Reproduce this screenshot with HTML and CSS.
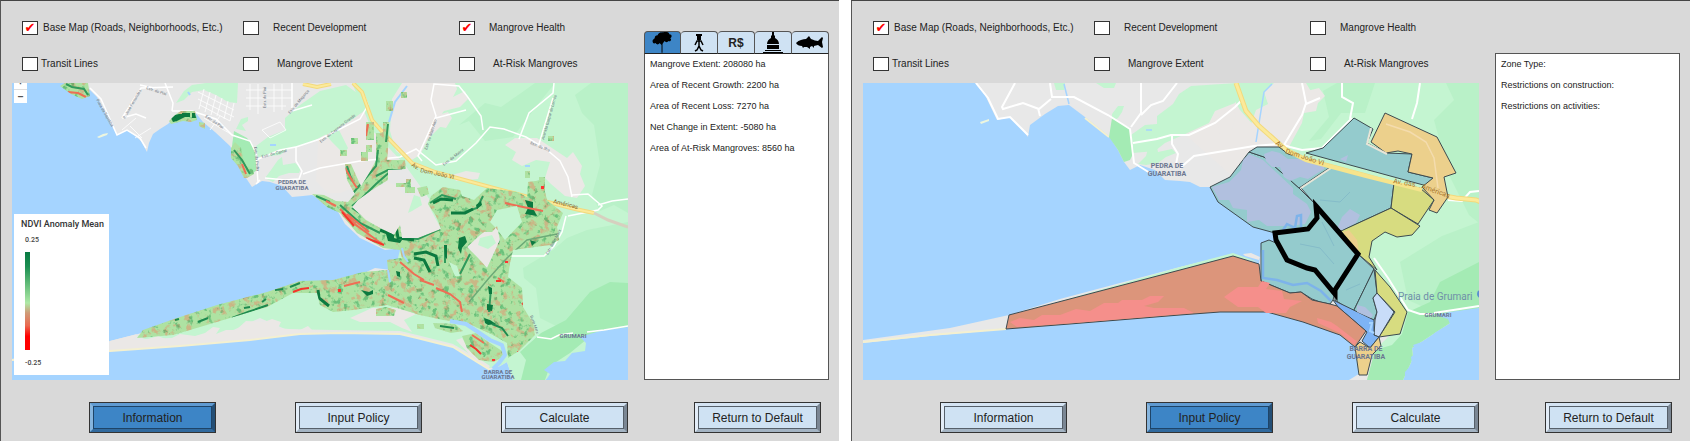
FILE: index.html
```html
<!DOCTYPE html>
<html lang="en">
<head>
<meta charset="utf-8">
<title>Mangrove Policy Dashboard</title>
<link rel="stylesheet" href="styles.css">
</head>
<body>
<main class="screens">

<section class="panel" aria-label="Information view">
  <div class="layers">
    <label class="layer"><input type="checkbox" class="tick" checked>Base Map (Roads, Neighborhoods, Etc.)</label>
    <label class="layer layer-spaced"><input type="checkbox" class="tick">Recent Development</label>
    <label class="layer layer-spaced"><input type="checkbox" class="tick" checked>Mangrove Health</label>
    <label class="layer layer-tight"><input type="checkbox" class="tick">Transit Lines</label>
    <label class="layer layer-wide"><input type="checkbox" class="tick">Mangrove Extent</label>
    <label class="layer layer-wide"><input type="checkbox" class="tick">At-Risk Mangroves</label>
  </div>

  <div class="map">
    <svg class="map-art" viewBox="12 83 616 297" role="img" aria-label="Mangrove health map">
      <defs>
        <filter id="speckGreen" x="0" y="0" width="1" height="1" color-interpolation-filters="sRGB">
          <feTurbulence type="fractalNoise" baseFrequency="0.16" numOctaves="3" seed="8"/>
          <feColorMatrix values="0 0 0 0 0.1  0 0 0 0 0.6  0 0 0 0 0.3  0 6 0 0 -3.4"/>
        </filter>
        <filter id="speckRed" x="0" y="0" width="1" height="1" color-interpolation-filters="sRGB">
          <feTurbulence type="fractalNoise" baseFrequency="0.14" numOctaves="4" seed="21"/>
          <feColorMatrix values="0 0 0 0 0.9  0 0 0 0 0.55  0 0 0 0 0.42  6 0 0 0 -3.2"/>
        </filter>
        <clipPath id="mangroves">
          <path clip-rule="evenodd" d="M312 194L324 195 336 201 348 202 360 188 371 170 376 160 376 135 383 132 383 122 389 122 388 150 387 160 405 160 406 169 388 170 388 180 372 190 358 200 352 207 366 220 380 228 394 235 400 225 402 238 418 238 441 229 436 216 428 204 431 196 443 187 460 190 462 196 474 200 487 188 517 192 527 197 528 182 542 180 547 200 563 213 557 227 559 240 550 245 513 250 510 263 508 277 522 288 523 307 533 323 535 335 520 350 508 358 507 343 493 335 467 323 443 320 420 315 387 305 353 310 333 312 320 305 317 293 293 293 267 307 230 318 200 327 173 335 137 338 143 330 177 318 217 305 267 292 300 281 333 280 363 272 388 270 387 260 402 258 400 250 383 248 357 233 340 213 327 207zM467 247L480 235 484 232 492 232 497 226 500 240 487 268 478 258zM490 222L497 210 517 206 522 222 505 240 496 228zM449 262L457 266 460 276 455 276z"/>
          <path d="M462 336l14-3 14 10 12 8 1 6-10 5-14-2-12-12zM433 323l22 1 8 7-12 2-16-5z"/>
          <path d="M60 86l5-3 23 0 2 13-8 3-11-5zM169 121l6-6 6-4 14 0 2 9-6 2-8-1-12 3zM199 122l6 1v6l-6-3zM231 148l4-6 6 6 2 10 4 8 6 4 1 4-7 4-3 0-6-12-7-8z"/>
          <path d="M401 92h6v6h-6zM386 101h7v10h-7zM351 138h7v6h-7zM340 150h7v6h-7zM361 152h7v9h-7zM366 145h6v7h-6zM366 122h8v18h-8zM376 133h11v30h-11zM525 171h5v7h-5zM539 177h6v17h-6zM548 136h6v5h-6zM345 164l6 0 8 18 4 8-8 4-8-14zM396 183h10v-4h5v8h4v6h-10v-6h-9zM417 188l10-2 2 8-8 3zM376 309l10-2 10 3-2 6-18 0zM417 324h7v5h-7z"/>
        </clipPath>
      </defs>
      <rect x="12" y="83" width="616" height="297" fill="#a5d4ff"/>
      <path fill="#e8e8e8" d="M85 83L88 88 97 97 106 115 117 135 127 130 134 135 141 141 147 152 149 143 153 134 160 129 168 124 172 120 180 112 195 112 203 122 215 132 230 146 240 165 246 178 252 187 262 181 270 182 282 186 292 197 303 196 312 195 328 202 337 210 345 224 360 238 385 250 401 248 402 260 387 260 391 270 375 268 362 274 330 281 300 283 285 290 250 298 218 307 185 318 160 327 138 334 110 341 12 359 12 361 110 351 180 346 250 340 300 334 340 333 400 334 417 338 453 347 477 362 490 370 500 366 507 362 513 380 545 380 628 330V83z"/>
      <path fill="#edf6df" d="M97 137l6-3 5-1-1 2-8 3z"/>
      <path fill="#ebe8e6" d="M320 110l32-24 40-3v90l-52 20-12 0-12-12z"/>
      <path fill="#c4f5d1" d="M352 83H628V330L545 380 513 380 507 362 500 366 490 368 477 358 453 344 417 335 400 331 333 330 285 329 260 318 220 336 145 339 137 336 218 310 300 290 390 290 400 250 430 200 405 165 372 130zM176 103l8-12 8-6 14-2h32l-1 20-9-1-12-7-12-5-12 2-8 8zM256 146l12-9 17-7 0-12 15-13 20-14 26-6 14 10 4 16-14 10-18 10-22 12-22 6-8 6-22 2zM265 178l6-8 7-10 4-3 1 8 12-2 6 5-2 5-10 0-10 3-6 6zM320 128l8-10 10 10 10 20-4 6-12-12zM236 129l5-10 7-2 0 4-6 4 4 6z"/>
      <path fill="#b9f1c8" d="M555 83l-16 20-26 34-28 4-16-20-10 4 26-22 16 4 20-14 14-10zM575 95l16-12h37v130l-14-8-14 6-8-16 8-30-6-40-12-12zM523 268l30-18 14-12 20-8 41-8v100l-60 10-28-14-4-30-12-10z"/>
      <path fill="#a4ebb4" d="M541 333L566 320 590 292 610 282 628 283V328L587 339 570 353 550 366 545 380 521 380 526 360 520 352zM234 131L247 138 256 150 257 170 249 176 240 160 232 146z"/>
      <path fill="#a5d4ff" d="M546 380L550 374 544 370 554 362 565 361 572 353 585 351 586 343 580 337 600 331 628 327V380z"/>
      <path fill="none" stroke="#fff" stroke-width="1.500" d="M587 332L604 330 628 326"/>
      <path fill="#ebe8e6" d="M402 83h53l2 6-4 8 12-6 3 8-8 8-16 4-8 10 4 6-12 12-8 16-10 6-14-10-6-20 2-32zM505 145l10-7h22l18 12 12 8 6-6 9 14-2 8 5 12-8 12-12-2-14-12-6-6 5-16-14-2-14 6-10-6 4-8zM352 205L372 190 388 182 396 186 405 195 417 196 428 204 432 212 441 229 418 240 394 238 370 225zM452 175l14-4 14 2-2 6-22 2zM467 247L480 235 484 232 492 232 497 226 500 240 487 268 478 258zM434 116l14-4 4 6-6 10-10-2z"/>
      <path fill="#c4f5d1" d="M408 213l6-18 6 2 2 8-10 6zM480 238l12-3 4 8-8 6-10-4z"/>
      <path fill="#ebe8e6" d="M110 341L137 334 132 340 145 340 158 336 168 340 180 334 195 336 205 333 213 327 220 328 216 334 226 330 236 330 246 321 264 322 272 319 281 322 278 328 300 330 308 326 312 330 333 331 250 339 180 345 110 350zM350 318L372 308 400 308 416 314 404 320 412 332 402 328 390 322 360 322zM456 340l6-2 10 16 18 12-2 3-12-8z"/>
      <path fill="none" stroke="#f4f0d0" stroke-width="2" d="M12 360L110 351 180 346 250 340 300 334 340 333 400 334 417 338 453 347 477 362 490 370"/>
      <g fill="none" stroke="#fff" stroke-width="1.500">
        <path d="M90 88L101 99 117 135 127 130 140 138 146 148M122 118l19-30 32-1M140 85l14 3M165 83l8 20-1 8M172 111h20l24 8 16 16 18 6 6 12 2 30M122 118l14-4 10 4M292 83v28l20-6M256 160l24-10 16-3 0 14 6 10-3 8-14 1-20-2M296 147l24-8 40-20 8-14-4-10M303 174l17-6 40-7 40-4 16-8 20 16 20-4 20-18 14-16 14 2 22 8 20 12 14 12 8 16 4 20M483 130l-2-14-14-20-8-10-25-2-3 16 5 16-18 40 4 5M554 83l-1 10-24 20-10 26M436 118l30-8M539 144l14-46M572 195l16-1 14 12-4 4-30 6M598 205l14-4 16-2M566 216l-4 16-8 14-10 10-36 0M537 337l14 2 8-4 14-2M256 184l4-4"/>
        <path stroke-width="1" stroke-opacity=".8" d="M198 92l36 18M198 99l36 18M200 105l30 16M204 89l-5 20M210 92l-5 20M216 95l-5 20M222 98l-5 18M228 101l-4 18M234 103l-4 18M246 90h46M246 98h46M246 106h40M250 84v26M258 84v30M274 84v28M282 84v26M262 130l18-8 6 8-16 8zM130 126l12 12M122 130l14-12M135 138l16-10M204 118l30 18M220 116l-10 14"/>
      </g>
      <path fill="none" stroke="#a5d4ff" stroke-width="2" d="M188 92l2 3M407 86l-12 16-6 20M270 145l6 0M525 166h5"/>
      <path fill="none" stroke="#f3d97c" stroke-width="4" d="M303 84l14 3 14-3M353 83l9 9 10 28 13 15 27 28 23 9 55 15 50 13 35 9 19 4"/>
      <path fill="none" stroke="#fbea9a" stroke-width="2" d="M303 84l14 3 14-3M353 83l9 9 10 28 13 15 27 28 23 9 55 15 50 13 35 9 19 4"/>
      <path fill="none" stroke="#d6d0bf" stroke-width="3" d="M594 213l14 7 20 7"/>
      <g clip-path="url(#mangroves)">
        <rect x="12" y="83" width="616" height="297" fill="#aee2a2"/>
        <rect x="12" y="83" width="616" height="297" filter="url(#speckRed)" opacity=".5"/>
        <rect x="12" y="83" width="616" height="297" filter="url(#speckGreen)" opacity=".45"/>
        <path fill="none" stroke="#2f9a5c" stroke-width="2" d="M66 84l6 3 12 2 4 6M316 196l14 6M347 166l4 12M378 150l-2 16-22 26-12 9M388 124l-2 18M352 206l10-8 14-14 16-14M340 205l20 18 20 10M352 208l24 16 18 11M400 238l18 1 22-10M430 203l12-8 14 4M465 212l12-4 6-12M445 245v18M491 288l-2 24M234 150l8 10 8 14M460 274l10-20M376 176l12-6 14 0"/>
        <path fill="#0c7a40" d="M171 118l4-3 8-2 2 4-8 4-4 1zM182 113l8 0 0 4-8 0zM192 113l3 0 1 5-4 0zM459 238l6-2 2 6-5 6-1 6-3-6zM525 200l8 2 0 6 4 8-12-2 3-6zM496 240l4-1-1 5-3 1zM484 318l6 2 6 4-8 1-3-2zM487 304l6 1-1 6-5-1zM396 271l4 1 0 5-3-1zM361 290l8 2 4-2 0 4-6 2zM530 240l6 2-4 4zM488 286l4 2 0 6-3 0zM444 245l3 0 0 14-2-2zM476 205l5-4 1 4-5 4zM386 234l8-2 0 6 8 2-2 3-12-2z"/>
        <path fill="none" stroke="#0c7a40" stroke-width="3" d="M414 254l12-2 10 4 2 10M414 258l10 2 6 12M318 290l1 8 10 8M380 230l10 4 6-8 2 12 16 2M433 203l8-4 12 1M451 213l14 0 8-4"/>
        <path fill="none" stroke="#1d8a4f" stroke-width="2" d="M232 318l16-6 20-7M198 322l10-4M244 308l6-1M300 283l-10 4M492 324l10 4 6 8M440 326l14 2M262 302l4-3M275 290l8-1M175 320l4-1"/>
        <path fill="none" stroke="#ee6e55" stroke-width="2" d="M340 209l16 16 26 19M347 214l22 18M68 92l10 1 8 4M326 201l10 5M345 168l8 14 4 6M436 288l14 6 10 8 2 10M472 335l12 8M420 280l14 5M505 203l18 4 20 4M400 262l14 12 10 6M388 295l16 8M242 164l4 10M368 124l-2 12M498 278l6 4M360 282l-16 4"/>
        <path fill="none" stroke="#f4352b" stroke-width="2" d="M293 292l8-3 8-1M342 212l12 14M366 238l18 7M470 345l6 4 5 5M522 303l2 2M496 281h5"/>
        <path fill="#f33" d="M338 289h3v3h-3zM541 186h3v3h-3zM517 351h3v2h-3zM492 359h3v2h-3zM505 261h3v2h-3z"/>
        <path fill="none" stroke="#6cab78" stroke-width="1.500" d="M557 234l-30 6-20 18-18 20-20 24"/>
      </g>
      <path fill="none" stroke="#a5d4ff" stroke-width="4" stroke-linejoin="round" d="M450 321l16 3 12 8 12 8 12 5 3 10-6 8-6 6"/>
      <path fill="none" stroke="#a5d4ff" stroke-width="2" d="M402 248l2 8 4 6M388 270l2 12"/>
      <g class="street">
        <text transform="translate(146 89) rotate(18)">Estr. do Piaí</text>
        <text transform="translate(96 100) rotate(60)">Praia da Sepetiba</text>
        <text transform="translate(125 119) rotate(-60)">R. José Fernandes</text>
        <text transform="translate(205 117) rotate(34)">Estr. do Piaí</text>
        <text transform="translate(266 108) rotate(-90)">Estr. do Piaí</text>
        <text transform="translate(290 114) rotate(-50)">Estr. do Magarça</text>
        <text transform="translate(262 158) rotate(-14)">Estr. do Cantal</text>
        <text transform="translate(254 147) rotate(84)">Estr. da Pedra</text>
        <text transform="translate(321 143) rotate(-38)">Estr. do Capoeira Grande</text>
        <text transform="translate(427 150) rotate(-72)">Estr. do Mato Alto</text>
        <text transform="translate(444 166) rotate(-38)">Estr. da Matriz</text>
        <text transform="translate(530 144) rotate(22)">Estr. da Ilha</text>
        <text transform="translate(544 140) rotate(-74)">Avenida Gaspar de Lemos</text>
        <text transform="translate(548 255) rotate(-62)">Estr. Burle Marx</text>
        <text transform="translate(530 316) rotate(70)">Burle Marx</text>
      </g>
      <g class="avenue">
        <text transform="translate(411 166) rotate(32)">Av.</text>
        <text transform="translate(420 172) rotate(12)">Dom João VI</text>
        <text transform="translate(553 203) rotate(14)">Américas</text>
      </g>
      <g class="place">
        <text x="292" y="184">PEDRA DE</text><text x="292" y="190">GUARATIBA</text>
        <text x="498" y="374">BARRA DE</text><text x="498" y="379">GUARATIBA</text>
        <text x="573" y="338">GRUMARI</text>
      </g>
    </svg>
    <div class="zoom"><button type="button" aria-label="Zoom in">+</button><button type="button" aria-label="Zoom out">–</button></div>
    <div class="legend">
      <h2>NDVI Anomaly Mean</h2>
      <span>0.25</span>
      <div class="ramp"></div>
      <span>-0.25</span>
    </div>
  </div>

  <div class="side">
    <div class="tabs">
      <button type="button" class="tab tab-on" aria-label="Mangroves"><svg viewBox="0 0 36 21"><path d="M8 10c-1-2 1-3 2-4 0-2 1-3 3-3 1-3 4-3 6-3 3-1 6 0 6 2 3 0 3 3 1 4 2 2 0 4-2 3-1 2-3 1-4 0l-2 3 0 9h-1v-8l-2-2c-1 2-3 2-4 0-2 1-3 0-3-1z"/></svg></button>
      <button type="button" class="tab" aria-label="People"><svg viewBox="0 0 36 21"><path d="M15 2h6v2h-1v4h-4V4h-1z"/><path d="M18 8v6M14 13l2-4h4l2 4M14 19l2-1 2-4 2 4 2 1" fill="none" stroke="#000" stroke-width="1.500"/></svg></button>
      <button type="button" class="tab tab-text">R$</button>
      <button type="button" class="tab" aria-label="Government"><svg viewBox="0 0 36 21"><path d="M17 0h2v3l1 1v2c2 1 4 3 4 6H12c0-3 2-5 4-6V4l1-1zM12 13h12v4H12zM10 18h16v1H10zM8 20h20v1H8z"/></svg></button>
      <button type="button" class="tab" aria-label="Fisheries"><svg viewBox="0 0 36 21"><path d="M4 11c3-3 7-4 10-4l3-3 2 3c3 1 5 2 7 2l4-4 1 1-1 4 1 5-1 1-4-3-4 1 0 2-2-2-2 1 0 2-3-2-3 0-1 1-1-2c-3 0-5-1-6-3z"/></svg></button>
    </div>
    <div class="facts facts-tabbed">
      <p>Mangrove Extent: 208080 ha</p>
      <p>Area of Recent Growth: 2200 ha</p>
      <p>Area of Recent Loss: 7270 ha</p>
      <p>Net Change in Extent: -5080 ha</p>
      <p>Area of At-Risk Mangroves: 8560 ha</p>
    </div>
  </div>

  <div class="modes">
    <button type="button" class="key key-on">Information</button>
    <button type="button" class="key">Input Policy</button>
    <button type="button" class="key">Calculate</button>
  </div>
  <div class="reset"><button type="button" class="key">Return to Default</button></div>
</section>

<section class="panel" aria-label="Input policy view">
  <div class="layers">
    <label class="layer"><input type="checkbox" class="tick" checked>Base Map (Roads, Neighborhoods, Etc.)</label>
    <label class="layer layer-spaced"><input type="checkbox" class="tick">Recent Development</label>
    <label class="layer layer-spaced"><input type="checkbox" class="tick">Mangrove Health</label>
    <label class="layer layer-tight"><input type="checkbox" class="tick">Transit Lines</label>
    <label class="layer layer-wide"><input type="checkbox" class="tick">Mangrove Extent</label>
    <label class="layer layer-wide"><input type="checkbox" class="tick">At-Risk Mangroves</label>
  </div>

  <div class="map">
    <svg class="map-art" viewBox="863 83 616 297" role="img" aria-label="Policy zone map">
      <rect x="863" y="83" width="616" height="297" fill="#a5d4ff"/>
      <path fill="#e8e8e8" d="M975 83L985 95 997 120 1010 117 1020 126 1028 137 1030 125 1045 114 1058 106 1069 105 1085 117 1109 136 1118 150 1124 162 1130 170 1140 165 1155 170 1165 180 1180 181 1190 182 1200 187 1210 187 1260 200 1300 240 1262 245 1259 264 1233 254 1180 267 1060 299 1009 315 950 328 863 340V343L930 336 1006 329 1070 324 1180 315 1220 312 1267 312 1303 322 1340 335 1355 347 1362 372 1349 380H1403L1413 358 1412 348 1450 323 1479 308V83z"/>
      <path fill="#edf6df" d="M980 122l9-3 0 2-8 3z"/>
      <path fill="none" stroke="#f4f0d0" stroke-width="2" d="M863 342L930 335 1006 329M1085 118l24 19"/>
      <path fill="#ebe8e6" d="M1180 130l20-20 40-27h60v100h-60zM1243 254l8-1 9 4-1 3-14-4z"/>
      <path fill="#c4f5d1" d="M1237 83H1479V308L1435 313 1450 323 1412 348 1413 358 1403 380H1367L1375 350 1395 330 1375 270 1330 210 1310 160 1270 144 1240 110 1232 96zM1131 135l14-10 12-1 0-8 16-12 6-10 12-8 46-3-2 20-20 8-6 12-26 12-18 8-10 8-22 2zM1054 83h11l-1 7-8 0zM1096 83h20l-2 5-10 0zM1112 114l6-8 6 0-2 6-4 6-6 4zM1138 164l8-8 4-14h6l2 10 14-3 4 4-10 4-8 6-12 2zM1180 267L1233 253 1258 262 1233 257 1180 271 1060 303 1009 316z"/>
      <path fill="#b9f1c8" d="M1375 83l-10 30-24 0-20 26-12 2 20-24-6-26 14-8zM1434 120l20-20-8-17h33v140l-10-8-20-40zM1400 262L1442 236 1479 222V300L1430 310 1408 300z"/>
      <path fill="#a4ebb4" d="M1112 118L1130 128 1134 152 1130 160 1124 162 1118 150 1109 137zM1367 380L1375 350 1392 345 1402 334 1408 312 1430 302 1440 282 1479 262V308L1450 323 1412 348 1413 358 1403 380z"/>
      <path fill="#a5d4ff" d="M1405 380V372L1412 364 1411 357 1417 352 1413 345 1425 341 1436 332 1450 324 1448 319 1436 315 1450 312 1479 308V380z"/>
      <path fill="#ebe8e6" d="M1256 110l12-6-4-12 10-9h32l6 10-8 6 14 4-2 8-12 2-2 10-12 22-8 6-24-12-8-12zM1216 117l14-10 6 8-4 14-12 6zM1303 92l16-4 6 8-10 10-10 2z"/>
      <path fill="none" stroke="#a5d4ff" stroke-width="1.500" d="M1272 84l-8 8-8 50M1064 84l5 20M1146 130l6 0"/>
      <g fill="none" stroke="#fff" stroke-width="2">
        <path d="M976 83L988 98 998 119 1010 117 1028 135M1015 83l-13 24 1 2 20-6 16 6 12-10M1050 83l2 14h22l34 18 22 14 4 34 16 10M1038 108l2 8M1141 83v30l-10 14M1177 83l-14 18-12 4-10 10M1133 143l24-4 14-4 18 0 26-12 20-16 8-8M1172 136v8l6 10-2 10M1180 168l14-12 60-10 24-2 24 6 20-2 30-30M1302 83l4 20-4 12-18 30 6 2M1342 83v14l11 6-3 16M1306 104l14-6M1420 83l-3 20-5 16M1448 200l14 1 8-9 9-1M1374 258l14 20 20 32 12 4 14 0M1434 313l45-7"/>
      </g>
      <path fill="none" stroke="#f3d97c" stroke-width="5" d="M1236 83l10 28 12 14 28 25 20 10 60 16 56 16 34 6 20 2 5 2 21 8"/>
      <path fill="none" stroke="#fbea9a" stroke-width="3" d="M1236 83l10 28 12 14 28 25 20 10 60 16 56 16 34 6 20 2 5 2 21 8"/>
      <g stroke="#3d4a4f" stroke-width="1" stroke-linejoin="round">
        <path fill="#94cbcd" d="M1210 187l20-10 19-25 15 5 35 31 16 16 2 14-9 11-33 4-22-6-35-25z"/>
        <path fill="#94cbcd" d="M1249 152l8-5h22l9 7 44 12-33 22-35-31z"/>
        <path fill="#94cbcd" d="M1306 153l17-5 31-30 19 11-6 14 19 10 26 1-4 18 25 6-6 8z"/>
        <path fill="#94cbcd" d="M1332 167l62 16-3 25-50 23-26-27-14-16z"/>
        <path fill="#ecd08c" d="M1385 113l52 24 19 36-12 4 4 20-11 16-8-3 5-10-12-13 11-9-25-6 4-18-14-3-12 2-15-11z"/>
        <path fill="#d7dc80" d="M1394 183l26 5 14 12-16 24-27-16z"/>
        <path fill="#d7dc80" d="M1391 208l29 18-8 9-15 2-12-5-13 9-3 16 8 13-19-16-17-23z"/>
        <path fill="#94cbcd" d="M1261 243l8-3 7 3 11 17 20 8 8 1 20 23-2 8-3 4-10-2-8-3-11-7-11 1-29-12z"/>
        <path fill="#94cbcd" d="M1359 255l15 14-21 43-18-12v-8z"/>
        <path fill="#94cbcd" d="M1374 269l3 24-4 5 4 14-3 8-21-8z"/>
        <path fill="#d7dc80" d="M1375 270l15 17 17 25-7 22-21 3 16-25-18-19z"/>
        <path fill="#c8dcf8" d="M1377 293l17 19-15 25-5-2 1-15 2-8-4-14z"/>
        <path fill="#7db3f5" d="M1333 300l41 20v15l5 2-9 11-8-7 5-9-29-25z"/>
        <path fill="#ecd08c" d="M1355 347l5-5 10 6 9-11 2 9-9 9-5 20h-8z"/>
        <path fill="#dc957b" d="M1009 315L1006 329 1070 324 1180 315 1220 312 1267 312 1303 322 1340 335 1355 347 1366 331 1337 306 1330 304 1312 300 1301 292 1290 293 1261 281 1259 264 1233 256 1180 270z"/>
      </g>
      <path fill="#f58f8b" d="M1010 322l10-4 14 2 8-5 18 0 16-6 14 2 14-8 14 0 4-3 20 0 8-4 14 0-6 6-14 4 10 2 30 0 10 5-60 5-60 5-57 4zM1224 297l14-10 20 0 4-6 8 2-4 6 16 2 2 8 18 2-12 6-4 6-20 0-8-6-20 0zM1317 318l14 4 6 4 18 14 2 1-3 4-14-12-22-10z"/>
      <path fill="#b1c0df" d="M1212 187l17-5 12-12 2-10 6-6 14 6 30 28 0 6 14 10 4 8-6 12-16 2-22 0-8-6-12 2 0-12-14-2-4-8-10 0zM1264 154l8-3 8 2 8 6 12 0 10 4 14 2 0 4-16 10-8-2-10 4-6-4-4-10-8 0-6-6zM1337 229l5-12 8-8 10 6-4 8-14 7zM1346 162l-6-3 8-4zM1357 305l8 2 8 8-2 3-14-6z"/>
      <path fill="#ecd08c" d="M1343 232l6-2 8 10 2 12z"/>
      <path fill="none" stroke="#7db3ea" stroke-width="2.500" d="M1263 250v28l14 2 16 5 14-2 14 8 10 10M1283 230l4-6 8 4 2-12 4-1 0 12"/>
      <path fill="none" stroke="#a5d4ff" stroke-width="2" d="M1369 323l3 0-2 8 4 2"/>
      <path fill="none" stroke="#f4dcae" stroke-width="1.500" d="M1386 124l24 8 16 10 8 16 4 30"/>
      <path fill="none" stroke="#e8e6d8" stroke-width="2" d="M1301 188l30-20M1371 128l-4 16 20 10"/>
      <path fill="none" stroke="#f6e48c" stroke-width="4" d="M1286 150l20 10 60 16 56 14"/>
      <path fill="#94cbcd" stroke="#000" stroke-width="5" d="M1316 206l42 48-23 36v4l-20-24-8-2-20-8-11-20-1-7 33-4 9-11z"/>
      <path fill="none" stroke="#85bcc9" d="M1320 200l20 2 10-10M1322 222l12 24M1300 244l20 4 14 16M1346 290l14-6"/>
      <g class="avenue avenue-large">
        <text transform="translate(1275 144) rotate(36)">Av.</text>
        <text transform="translate(1285 153) rotate(18)">Dom João VI</text>
        <text transform="translate(1393 183) rotate(10)">Av. das</text>
        <text transform="translate(1421 188) rotate(20)">Américas</text>
      </g>
      <g class="place place-large">
        <text x="1167" y="168">PEDRA DE</text><text x="1167" y="176">GUARATIBA</text>
        <text x="1366" y="351">BARRA DE</text><text x="1366" y="359">GUARATIBA</text>
      </g>
      <g class="place"><text x="1438" y="317">GRUMARI</text></g>
      <text class="beach" x="1398" y="300">Praia de Grumari</text>
      <circle cx="1481" cy="294" r="4" fill="#5b8fd0"/>
    </svg>
  </div>

  <div class="side side-plain">
    <div class="facts">
      <p>Zone Type:</p>
      <p>Restrictions on construction:</p>
      <p>Restrictions on activities:</p>
    </div>
  </div>

  <div class="modes">
    <button type="button" class="key">Information</button>
    <button type="button" class="key key-on">Input Policy</button>
    <button type="button" class="key">Calculate</button>
  </div>
  <div class="reset"><button type="button" class="key">Return to Default</button></div>
</section>

</main>
</body>
</html>
```
FILE: styles.css
```css
* { box-sizing: border-box; }

body {
  margin: 0;
  background: #fff;
  color: #222;
  font-family: "Liberation Sans", Arial, sans-serif;
}

button, input { font: inherit; color: inherit; margin: 0; }

.screens {
  display: grid;
  grid-template-columns: 1fr 1fr;
  gap: 12px;
}

.panel {
  display: grid;
  grid-template-columns: 616fr 185fr;
  grid-template-areas: "layers side" "map side" "modes reset";
  column-gap: 16px;
  padding: 19px 10px 8px 11px;
  background: #d9d9d9;
  border-top: 1px solid #444;
  border-left: 1px solid #555;
}

/* layer switches */
.layers {
  grid-area: layers;
  display: grid;
  grid-template-columns: 221fr 216fr 169fr;
  row-gap: 22px;
  padding: 1px 0 12px 10px;
}

.layer {
  display: flex;
  align-items: center;
  gap: 5px;
  height: 14px;
  font-size: 10px;
  line-height: 14px;
  white-space: nowrap;
}
.layer-tight { gap: 3px; }
.layer-spaced { gap: 14px; }
.layer-wide { gap: 18px; }

.tick {
  appearance: none;
  flex: none;
  display: grid;
  place-items: center;
  width: 16px;
  height: 14px;
  background: #fff;
  border: 1px solid #333;
}
.tick:checked::before {
  content: "✔";
  color: #f00;
  font: 13px/12px "DejaVu Sans", sans-serif;
}

/* maps */
.map {
  grid-area: map;
  position: relative;
  overflow: hidden;
}
.map-art { display: block; width: 100%; height: auto; }

.street { font: 4px Roboto, sans-serif; fill: #6d7580; }
.avenue { font: 6px Roboto, sans-serif; fill: #8a6a2c; }
.avenue-large { font-size: 7px; fill: #a8752c; }
.place { font: 700 6px Roboto, sans-serif; fill: #6b7690; text-anchor: middle; }
.place-large { font-size: 7px; }
.beach { font: 10px Roboto, sans-serif; fill: #6f8fa8; }

.zoom {
  position: absolute;
  top: -8px;
  left: 2px;
  width: 13px;
  background: #fff;
}
.zoom button {
  display: block;
  width: 100%;
  height: 14px;
  padding: 0;
  border: 0;
  background: none;
  color: #555;
  font: 700 10px/14px Roboto, sans-serif;
}
.zoom button + button { border-top: 1px solid #ddd; }

.legend {
  position: absolute;
  left: 2px;
  bottom: 5px;
  display: flex;
  flex-direction: column;
  align-items: flex-start;
  width: 95px;
  padding: 5px 7px 7px;
  background: #fff;
  color: #444;
  font: 500 7px/10px Roboto, sans-serif;
}
.legend h2 {
  margin: 0 0 6px;
  font-size: 9px;
  font-weight: 500;
  line-height: 10px;
  color: #333;
  white-space: nowrap;
}
.legend span { padding-left: 4px; }
.ramp {
  width: 5px;
  height: 98px;
  margin: 7px 4px 8px;
  background: linear-gradient(#087a42 0%, #1c8f52 15%, #5fba77 32%, #aee9a6 52%, #cf9c78 62%, #ea6a50 75%, #f00 86%);
}

/* side panel */
.side {
  grid-area: side;
  display: flex;
  flex-direction: column;
  padding-top: 11px;
}
.side-plain { padding-top: 33px; }

.tabs { display: grid; grid-template-columns: repeat(5, 1fr); }
.tab {
  height: 23px;
  padding: 0;
  border: 1px solid #555;
  border-bottom-color: #222;
  border-left-width: 0;
  border-radius: 4px 4px 0 0;
  background: #cfe2f3;
}
.tab:first-child { border-left-width: 1px; }
.tab-on { background: #3d85c6; }
.tab svg { display: block; width: 100%; height: 21px; }
.tab-text { font-size: 12px; font-weight: 700; line-height: 20px; }

.facts {
  flex: 1;
  display: flex;
  flex-direction: column;
  gap: 11px;
  padding: 5px;
  background: #fff;
  border: 1px solid #555;
  font-size: 9px;
  line-height: 10px;
}
.facts-tabbed { border-top: 0; }
.facts p { margin: 0; }

/* bevelled buttons */
.modes {
  grid-area: modes;
  display: flex;
  justify-content: space-between;
  padding: 22px 0 0 77px;
}
.reset {
  grid-area: reset;
  display: flex;
  justify-content: flex-end;
  padding: 22px 8px 0 0;
}
.key {
  width: 127px;
  height: 31px;
  padding: 0;
  border: 4px solid;
  border-color: #d5e4f3 #7b8794 #a4b4c3 #e3edf8;
  outline: 1px solid #333;
  outline-offset: -1px;
  box-shadow: inset 0 0 0 1px #56606a;
  background: #cfe2f3;
  font-size: 12px;
  line-height: 20px;
}
.key-on {
  border-color: #5f9ad1 #244f76 #316a9e #86b5de;
  box-shadow: inset 0 0 0 1px #1e4468;
  background: #3d85c6;
}
```
